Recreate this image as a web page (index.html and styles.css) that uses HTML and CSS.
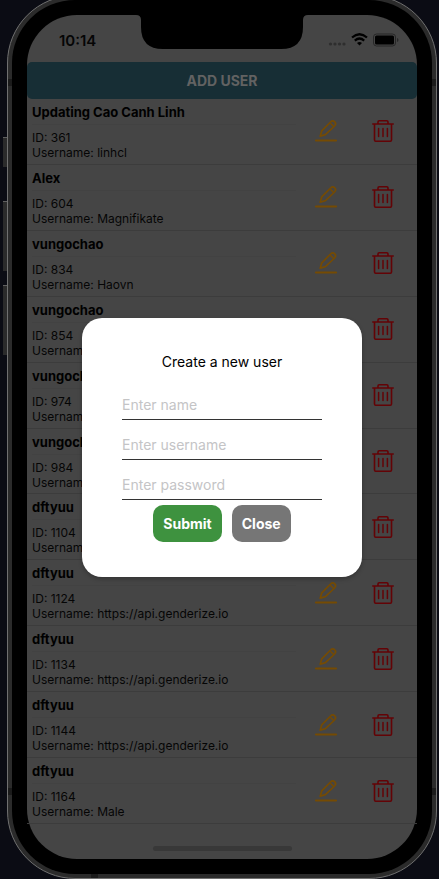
FILE: index.html
```
<!DOCTYPE html>
<html lang="en">
<head>
<meta charset="utf-8">
<meta name="viewport" content="width=device-width, initial-scale=1">
<title>Users</title>
<link rel="stylesheet" href="styles.css">
</head>
<body>
<svg class="sprite" aria-hidden="true">
  <symbol id="pencil" viewBox="0 0 22 22">
    <path d="M5.2 16.2 6.8 10.8 15.6 2Q17.700 0 19.700 1.900 21.600 3.900 19.600 6L10.400 14.600Z" fill="none" stroke="currentColor" stroke-width="1.7" stroke-linejoin="round"/>
    <path d="M15.400 3.200 18.400 6.200" stroke="currentColor" stroke-width="1.500"/>
    <path d="M.8 20.500H21.200" stroke="currentColor" stroke-width="1.800" stroke-linecap="round"/>
  </symbol>
  <symbol id="trash" viewBox="0 0 22 22">
    <path d="M.8 4H21.200 M2.500 4V20Q2.500 21.200 3.700 21.200H18.300Q19.500 21.200 19.500 20V4 M6 4V2Q6 .8 7.200.8H14.800Q16 .8 16 2V4" fill="none" stroke="currentColor" stroke-width="1.600" stroke-linecap="round" stroke-linejoin="round"/>
    <path d="M6.600 8.600V16.600M11 8.600V16.600M15.400 8.600V16.600" stroke="currentColor" stroke-width="1.500" stroke-linecap="round"/>
  </symbol>
</svg>
<div class="device">
  <i class="key key-mute"></i><i class="key key-up"></i><i class="key key-down"></i>
  <i class="seam seam-tl"></i><i class="seam seam-tr"></i><i class="seam seam-bl"></i><i class="seam seam-br"></i><i class="seam seam-base"></i>
  <div class="bezel">
    <div class="screen">
      <svg class="notch" viewBox="0 0 172 35" aria-hidden="true"><path d="M0 0H172Q167 0 167 5V12Q167 34 145 34H27Q5 34 5 12V5Q5 0 0 0Z" fill="#000"/></svg>
      <header class="status">
        <time>10:14</time>
        <svg class="signals" viewBox="0 0 72 16" aria-hidden="true">
          <g fill="#2e2e2e"><circle cx="3.500" cy="12" r="1.600"/><circle cx="8" cy="12" r="1.600"/><circle cx="12.500" cy="12" r="1.600"/><circle cx="17" cy="12" r="1.600"/></g>
          <g fill="none" stroke="#000" stroke-width="2.200"><path d="M25 5.500Q32.500-1 40 5.500"/><path d="M27.800 8.600Q32.500 4.400 37.200 8.600"/></g>
          <path d="M30 11Q32.500 9 35 11L32.500 13.500Z"/>
          <rect x="46.500" y="2" width="22" height="12" rx="3" fill="none" stroke="#272727"/>
          <rect x="48" y="3.500" width="19" height="9" rx="1.500"/>
          <path d="M70 6Q71.500 6.500 71.500 8T70 10Z" fill="#272727"/>
        </svg>
      </header>
      <button class="add" type="button">ADD USER</button>
      <ul class="users">
        <li class="user"><div class="info"><h2>Updating Cao Canh Linh</h2><p>ID: 361<br>Username: linhcl</p></div><button class="icon edit" type="button" aria-label="Edit"><svg><use href="#pencil"/></svg></button><button class="icon delete" type="button" aria-label="Delete"><svg><use href="#trash"/></svg></button></li>
        <li class="user"><div class="info"><h2>Alex</h2><p>ID: 604<br>Username: Magnifikate</p></div><button class="icon edit" type="button" aria-label="Edit"><svg><use href="#pencil"/></svg></button><button class="icon delete" type="button" aria-label="Delete"><svg><use href="#trash"/></svg></button></li>
        <li class="user"><div class="info"><h2>vungochao</h2><p>ID: 834<br>Username: Haovn</p></div><button class="icon edit" type="button" aria-label="Edit"><svg><use href="#pencil"/></svg></button><button class="icon delete" type="button" aria-label="Delete"><svg><use href="#trash"/></svg></button></li>
        <li class="user"><div class="info"><h2>vungochao</h2><p>ID: 854<br>Username:</p></div><button class="icon edit" type="button" aria-label="Edit"><svg><use href="#pencil"/></svg></button><button class="icon delete" type="button" aria-label="Delete"><svg><use href="#trash"/></svg></button></li>
        <li class="user"><div class="info"><h2>vungochao</h2><p>ID: 974<br>Username:</p></div><button class="icon edit" type="button" aria-label="Edit"><svg><use href="#pencil"/></svg></button><button class="icon delete" type="button" aria-label="Delete"><svg><use href="#trash"/></svg></button></li>
        <li class="user"><div class="info"><h2>vungochao</h2><p>ID: 984<br>Username:</p></div><button class="icon edit" type="button" aria-label="Edit"><svg><use href="#pencil"/></svg></button><button class="icon delete" type="button" aria-label="Delete"><svg><use href="#trash"/></svg></button></li>
        <li class="user"><div class="info"><h2>dftyuu</h2><p>ID: 1104<br>Username:</p></div><button class="icon edit" type="button" aria-label="Edit"><svg><use href="#pencil"/></svg></button><button class="icon delete" type="button" aria-label="Delete"><svg><use href="#trash"/></svg></button></li>
        <li class="user"><div class="info"><h2>dftyuu</h2><p>ID: 1124<br>Username: https://api.genderize.io</p></div><button class="icon edit" type="button" aria-label="Edit"><svg><use href="#pencil"/></svg></button><button class="icon delete" type="button" aria-label="Delete"><svg><use href="#trash"/></svg></button></li>
        <li class="user"><div class="info"><h2>dftyuu</h2><p>ID: 1134<br>Username: https://api.genderize.io</p></div><button class="icon edit" type="button" aria-label="Edit"><svg><use href="#pencil"/></svg></button><button class="icon delete" type="button" aria-label="Delete"><svg><use href="#trash"/></svg></button></li>
        <li class="user"><div class="info"><h2>dftyuu</h2><p>ID: 1144<br>Username: https://api.genderize.io</p></div><button class="icon edit" type="button" aria-label="Edit"><svg><use href="#pencil"/></svg></button><button class="icon delete" type="button" aria-label="Delete"><svg><use href="#trash"/></svg></button></li>
        <li class="user"><div class="info"><h2>dftyuu</h2><p>ID: 1164<br>Username: Male</p></div><button class="icon edit" type="button" aria-label="Edit"><svg><use href="#pencil"/></svg></button><button class="icon delete" type="button" aria-label="Delete"><svg><use href="#trash"/></svg></button></li>
      </ul>
      <footer class="home"><span></span></footer>
      <div class="overlay">
        <form class="modal" role="dialog" aria-labelledby="title">
          <h1 id="title">Create a new user</h1>
          <input type="text" placeholder="Enter name" aria-label="Name">
          <input type="text" placeholder="Enter username" aria-label="Username">
          <input type="password" placeholder="Enter password" aria-label="Password">
          <div class="buttons"><button class="submit" type="button">Submit</button><button class="close" type="button">Close</button></div>
        </form>
      </div>
    </div>
  </div>
</div>
</body>
</html>
```
FILE: styles.css
```
* { box-sizing: border-box; }
html { height: 100%; background: #0b0c14; }
body {
  height: 100%;
  margin: 0;
  padding: 0 2px 0 7px;
  overflow: hidden;
  font-family: Inter, "Liberation Sans", sans-serif;
  font-size: 13px;
  color: #050505;
}
button, input { font: inherit; border: 0; margin: 0; }
.sprite { position: absolute; width: 0; height: 0; }

.device {
  position: relative;
  height: calc(100% + 5px);
  margin-top: -5px;
  padding: 4px;
  background: #2b2b2b;
  border: 1px solid #707070;
  border-radius: 68px;
}
.key {
  position: absolute;
  left: -5px;
  width: 4px;
  height: 70px;
  background: #2b2b2b;
  border-top: 1px solid #606060;
}
.key-mute { top: 141px; height: 30px; }
.key-up { top: 205px; }
.key-down { top: 289px; }
.seam { position: absolute; width: 4px; height: 7px; background: #1b1b1b; }
.seam-tl, .seam-tr { top: 83px; }
.seam-bl, .seam-br { bottom: 83px; }
.seam-tl, .seam-bl { left: 0; }
.seam-tr, .seam-br { right: 0; }
.seam-base { left: 83px; bottom: 0; width: 7px; height: 4px; }
.bezel {
  height: 100%;
  padding: 15px;
  background: #000;
  border-radius: 63px;
}
.screen {
  position: relative;
  display: flex;
  flex-direction: column;
  height: 100%;
  background: #454545;
  border-radius: 50px;
}
.notch {
  position: absolute;
  top: 0;
  left: 50%;
  width: 172px;
  height: 35px;
  transform: translateX(-50%);
}

.status {
  flex: none;
  display: flex;
  justify-content: space-between;
  align-items: center;
  height: 47px;
  padding: 3px 18px 0 32px;
  font-size: 15px;
  font-weight: 600;
}
.signals { width: 72px; height: 16px; }
.add {
  flex: none;
  height: 37px;
  padding: 0;
  background: #172e35;
  border-radius: 5px;
  color: #626262;
  font-size: 14px;
  font-weight: 700;
}

.users {
  flex: 1;
  display: grid;
  grid-auto-rows: 1fr;
  min-height: 0;
  margin: 0;
  padding: 0;
  list-style: none;
}
.user {
  display: flex;
  align-items: center;
  gap: 35px;
  padding: 0 23px 0 5px;
  border-bottom: 1px solid #3c3c3c;
}
.info { flex: 1; align-self: flex-start; padding-top: 5px; margin-right: -16px; white-space: nowrap; }
.info h2 {
  margin: 0 0 5px;
  padding-bottom: 4px;
  border-bottom: 1px solid #424242;
  font-size: 13px;
  line-height: 16px;
  font-weight: 700;
  color: #000;
}
.info p { margin: 0; font-size: 12px; line-height: 15px; }
.icon { display: block; width: 22px; height: 22px; padding: 0; background: none; }
.icon svg { display: block; width: 22px; height: 22px; }
.edit { color: #754b03; }
.delete { color: #630306; }

.home { flex: none; display: flex; justify-content: center; align-items: center; height: 35px; padding-top: 13px; }
.home span { width: 139px; height: 5px; border-radius: 3px; background: #383838; }

.overlay { position: absolute; inset: 21px 0 0; display: grid; place-items: center; }
.modal {
  display: flex;
  flex-direction: column;
  width: 280px;
  padding: 35px 40px;
  background: #fff;
  border-radius: 20px;
  box-shadow: 0 2px 4px rgba(0, 0, 0, .25);
}
.modal h1 {
  margin: 0 0 10px;
  font-size: 14px;
  line-height: 17px;
  font-weight: 400;
  text-align: center;
  color: #000;
}
.modal input {
  width: 100%;
  height: 40px;
  padding: 10px 0 0;
  background: none;
  border-bottom: 1px solid #333;
  border-radius: 0;
  outline: 0;
  font-size: 14px;
}
.modal input::placeholder { color: #c4c4c6; opacity: 1; }
.buttons { display: flex; justify-content: center; gap: 10px; margin-top: 5px; }
.buttons button {
  height: 37px;
  padding: 0 10px;
  border-radius: 10px;
  color: #fff;
  font-size: 14px;
  font-weight: 700;
}
.submit { background: #3e923f; }
.close { background: #767676; }
```
